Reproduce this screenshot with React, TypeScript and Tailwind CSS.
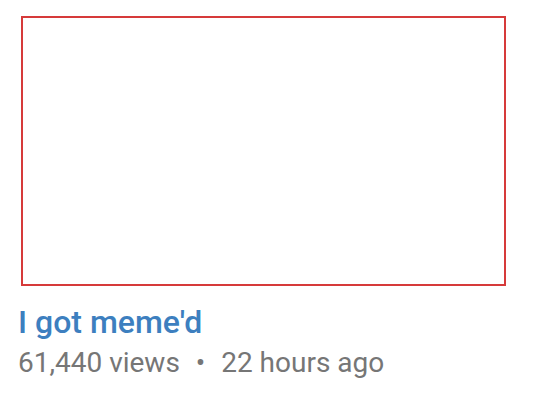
export default function App() {
  return (
    <div className="w-[540px] h-[400px] bg-white" style={{ fontFamily: "Roboto, 'Liberation Sans', sans-serif" }}>
      <div className="pt-[16px] pl-[21px]">
        <div className="w-[485px] h-[270px] border-2 border-[#d63a3a]" />
      </div>
      <div className="pl-[18px] pt-[18px]">
        <div className="text-[32px] leading-[36px] font-medium text-[#3d7fbf]">I got meme'd</div>
        <div className="text-[28px] leading-[34px] text-[#767676] mt-[6px]">
          61,440 views <span className="mx-[9px]">•</span> 22 hours ago
        </div>
      </div>
    </div>
  );
}
